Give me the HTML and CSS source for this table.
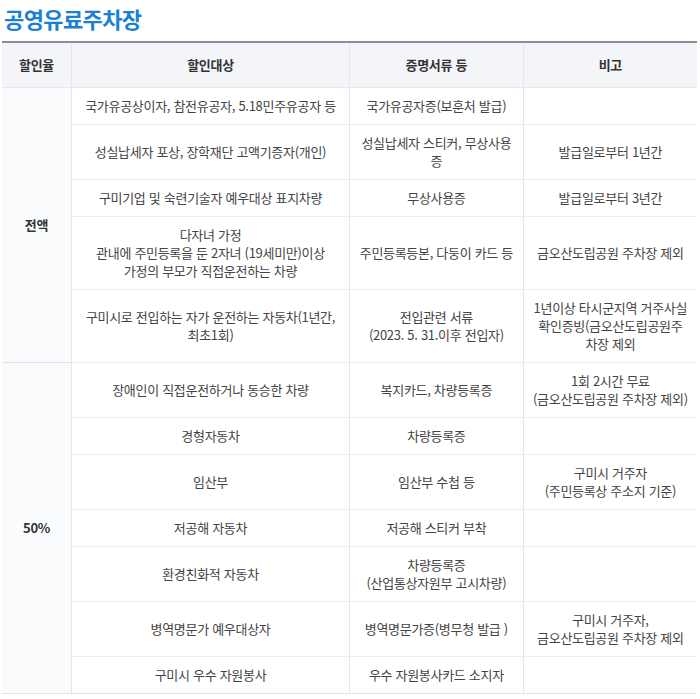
FILE: index.html
```html
<!DOCTYPE html>
<html lang="ko">
<head>
<meta charset="utf-8">
<link rel="stylesheet" href="styles.css">
</head>
<body>
<div class="page">
  <h2 class="title">공영유료주차장</h2>
  <table class="tbl">
    <colgroup>
      <col class="c1"><col class="c2"><col class="c3"><col class="c4">
    </colgroup>
    <thead>
      <tr><th>할인율</th><th>할인대상</th><th>증명서류 등</th><th>비고</th></tr>
    </thead>
    <tbody>
      <tr>
        <th rowspan="5" class="rate">전액</th>
        <td>국가유공상이자, 참전유공자, 5.18민주유공자 등</td>
        <td>국가유공자증(보훈처 발급)</td>
        <td></td>
      </tr>
      <tr>
        <td>성실납세자 포상, 장학재단 고액기증자(개인)</td>
        <td>성실납세자 스티커, 무상사용<br>증</td>
        <td>발급일로부터 1년간</td>
      </tr>
      <tr>
        <td>구미기업 및 숙련기술자 예우대상 표지차량</td>
        <td>무상사용증</td>
        <td>발급일로부터 3년간</td>
      </tr>
      <tr>
        <td>다자녀 가정<br>관내에 주민등록을 둔 2자녀 (19세미만)이상<br>가정의 부모가 직접운전하는 차량</td>
        <td>주민등록등본, 다둥이 카드 등</td>
        <td>금오산도립공원 주차장 제외</td>
      </tr>
      <tr>
        <td>구미시로 전입하는 자가 운전하는 자동차(1년간,<br>최초1회)</td>
        <td>전입관련 서류<br>(2023. 5. 31.이후 전입자)</td>
        <td>1년이상 타시군지역 거주사실<br>확인증빙(금오산도립공원주<br>차장 제외</td>
      </tr>
      <tr>
        <th rowspan="7" class="rate">50%</th>
        <td>장애인이 직접운전하거나 동승한 차량</td>
        <td>복지카드, 차량등록증</td>
        <td>1회 2시간 무료<br>(금오산도립공원 주차장 제외)</td>
      </tr>
      <tr>
        <td>경형자동차</td>
        <td>차량등록증</td>
        <td></td>
      </tr>
      <tr>
        <td>임산부</td>
        <td>임산부 수첩 등</td>
        <td>구미시 거주자<br>(주민등록상 주소지 기준)</td>
      </tr>
      <tr>
        <td>저공해 자동차</td>
        <td>저공해 스티커 부착</td>
        <td></td>
      </tr>
      <tr>
        <td>환경친화적 자동차</td>
        <td>차량등록증<br>(산업통상자원부 고시차량)</td>
        <td></td>
      </tr>
      <tr>
        <td>병역명문가 예우대상자</td>
        <td>병역명문가증(병무청 발급 )</td>
        <td>구미시 거주자,<br>금오산도립공원 주차장 제외</td>
      </tr>
      <tr>
        <td>구미시 우수 자원봉사</td>
        <td>우수 자원봉사카드 소지자</td>
        <td></td>
      </tr>
    </tbody>
  </table>
</div>
</body>
</html>
```

FILE: styles.css
```css
html, body {
  margin: 0;
  padding: 0;
  background: #ffffff;
}
body {
  font-family: "Noto Sans CJK KR", "Noto Sans", sans-serif;
  color: #444444;
}
.page {
  padding: 0 3px 0 2px;
}
.title {
  margin: 0;
  padding: 3px 0 0 2px;
  height: 41px;
  box-sizing: border-box;
  font-size: 22px;
  line-height: 30px;
  font-weight: 700;
  color: #1b7fd6;
  letter-spacing: -0.6px;
}
.tbl {
  width: 100%;
  border-collapse: collapse;
  table-layout: fixed;
  border-top: 2px solid #8b8b9e;
  font-size: 13px;
  line-height: 18px;
  letter-spacing: -0.3px;
}
.c1 { width: 10%; }
.c2 { width: 40%; }
.c3 { width: 25%; }
.c4 { width: 25%; }
.tbl th, .tbl td {
  text-align: center;
  vertical-align: middle;
  padding: 9px 6px;
  border: 1px solid #e6e7ec;
  border-top: 0;
  word-break: keep-all;
}
.tbl tr > :first-child { border-left: 0; }
.tbl tr > :last-child { border-right: 0; }
.tbl thead th {
  background: #f3f5f9;
  color: #333333;
  font-weight: 700;
  height: 45px;
  box-sizing: border-box;
  padding: 0 6px;
}
.tbl tbody th.rate {
  background: #fafbfd;
  color: #333333;
  font-weight: 700;
  border-left: 0;
}
.tbl tbody td {
  border-bottom: 1px solid #ededf1;
}
.tbl tbody td:last-child { border-right: 0; }
.tbl tbody tr:last-child td,
.tbl tbody th.rate { border-bottom: 1px solid #e2e3e8; }
```
